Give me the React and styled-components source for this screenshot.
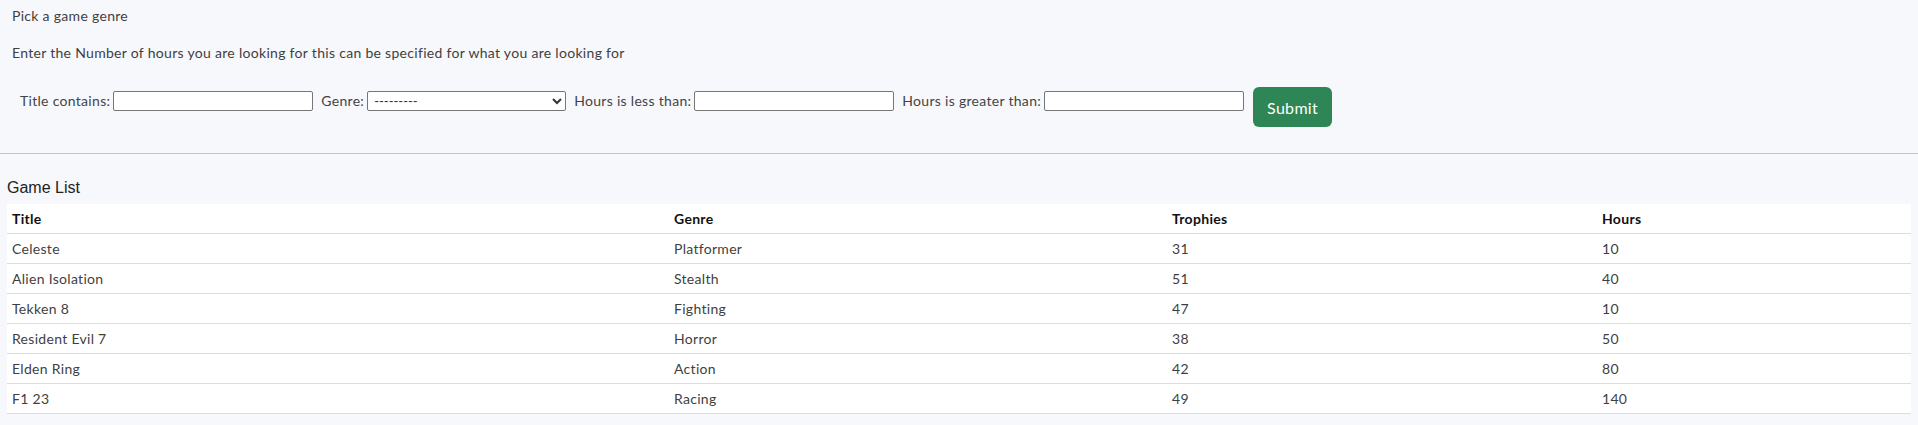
import styled, { createGlobalStyle } from 'styled-components';

const GlobalStyle = createGlobalStyle`
  body {
    margin: 0;
    background-color: #f7f8fc;
    font-family: "Lato", "Open Sans", sans-serif;
    letter-spacing: 0.3px;
    color: #3f3f3f;
  }
`;

const games = [
  { title: 'Celeste', genre: 'Platformer', trophies: 31, hours: 10 },
  { title: 'Alien Isolation', genre: 'Stealth', trophies: 51, hours: 40 },
  { title: 'Tekken 8', genre: 'Fighting', trophies: 47, hours: 10 },
  { title: 'Resident Evil 7', genre: 'Horror', trophies: 38, hours: 50 },
  { title: 'Elden Ring', genre: 'Action', trophies: 42, hours: 80 },
  { title: 'F1 23', genre: 'Racing', trophies: 49, hours: 140 },
];

function App() {
  return (
    <>
      <GlobalStyle />
      <FilterSection>
        <Note>Pick a game genre</Note>
        <Note>Enter the Number of hours you are looking for this can be specified for what you are looking for</Note>

        <FilterForm onSubmit={(e) => e.preventDefault()}>
          <Field>
            <label>Title contains:</label>
            <TextInput type="text" />
          </Field>
          <Field>
            <label>Genre:</label>
            <GenreSelect defaultValue="">
              <option value="">---------</option>
              <option>Platformer</option>
              <option>Stealth</option>
              <option>Fighting</option>
              <option>Horror</option>
              <option>Action</option>
              <option>Racing</option>
            </GenreSelect>
          </Field>
          <Field>
            <label>Hours is less than:</label>
            <TextInput type="text" />
          </Field>
          <Field>
            <label>Hours is greater than:</label>
            <TextInput type="text" />
          </Field>
          <SubmitButton type="submit">Submit</SubmitButton>
        </FilterForm>
      </FilterSection>

      <Divider />

      <ListSection>
        <ListHeading>Game List</ListHeading>
        <GameTable>
          <colgroup>
            <col style={{ width: '662px' }} />
            <col style={{ width: '498px' }} />
            <col style={{ width: '430px' }} />
            <col />
          </colgroup>
          <thead>
            <tr>
              <th>Title</th>
              <th>Genre</th>
              <th>Trophies</th>
              <th>Hours</th>
            </tr>
          </thead>
          <tbody>
            {games.map((g) => (
              <tr key={g.title}>
                <td>{g.title}</td>
                <td>{g.genre}</td>
                <td>{g.trophies}</td>
                <td>{g.hours}</td>
              </tr>
            ))}
          </tbody>
        </GameTable>
      </ListSection>
    </>
  );
}

const FilterSection = styled.div`
  padding: 5px 12px 0;
`;

const Note = styled.p`
  margin: 0 0 16px;
  font-size: 14px;
  line-height: 21px;
`;

const FilterForm = styled.form`
  display: flex;
  align-items: flex-start;
  gap: 8px;
  padding: 8px 0 0 8px;
`;

const Field = styled.div`
  display: flex;
  align-items: center;
  gap: 3px;
  margin-top: 4px;

  label {
    font-size: 14px;
    line-height: 20px;
    color: #444;
  }
`;

const TextInput = styled.input`
  box-sizing: border-box;
  width: 200px;
  height: 20px;
  margin: 0;
  padding: 1px 3px;
  border: 1px solid #767676;
  border-radius: 2px;
  background: #fff;
  font-size: 13px;
`;

const GenreSelect = styled.select`
  box-sizing: border-box;
  width: 199px;
  height: 20px;
  margin: 0;
  padding: 0 2px;
  border: 1px solid #767676;
  border-radius: 2px;
  background: #fff;
  font-family: "Lato", sans-serif;
  font-size: 13px;
  color: #333;
`;

const SubmitButton = styled.button`
  width: 79px;
  height: 40px;
  margin-left: 1px;
  border: none;
  border-radius: 6px;
  background-color: #2e8555;
  color: #fff;
  font-family: "Lato", sans-serif;
  font-size: 16px;
  letter-spacing: 0.3px;
  cursor: pointer;
`;

const Divider = styled.hr`
  margin: 26px 0 0;
  border: none;
  border-top: 1px solid #c5c6ca;
`;

const ListSection = styled.div`
  padding: 0 7px;
`;

const ListHeading = styled.h2`
  margin: 24px 0 6px;
  font-family: "Liberation Sans", Arial, sans-serif;
  font-weight: 400;
  font-size: 16px;
  line-height: 20px;
  letter-spacing: 0;
  color: #222;
`;

const GameTable = styled.table`
  width: 100%;
  border-collapse: collapse;
  table-layout: fixed;
  background-color: #fff;
  font-size: 14px;

  th, td {
    padding: 4px 5px;
    line-height: 21px;
    text-align: left;
    border-bottom: 1px solid #dcdde3;
  }

  th {
    font-weight: 700;
    color: #111;
  }

  td {
    color: #3f3f3f;
  }
`;

export default App;
